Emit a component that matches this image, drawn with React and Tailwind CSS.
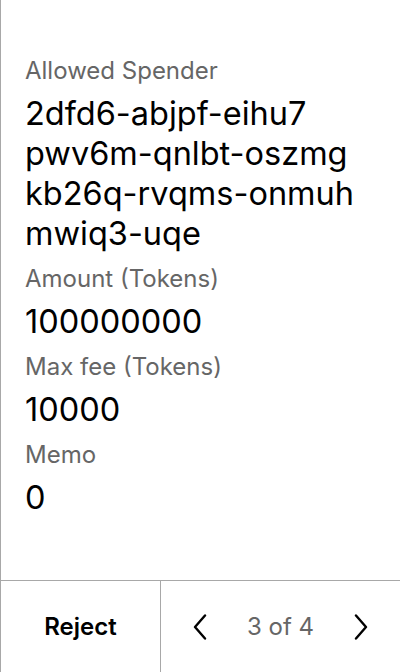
const fields = [
  { label: 'Allowed Spender', lines: ['2dfd6-abjpf-eihu7', 'pwv6m-qnlbt-oszmg', 'kb26q-rvqms-onmuh', 'mwiq3-uqe'] },
  { label: 'Amount (Tokens)', lines: ['100000000'] },
  { label: 'Max fee (Tokens)', lines: ['10000'] },
  { label: 'Memo', lines: ['0'] },
]

function Chevron({ dir }) {
  const pts = dir === 'left' ? '12,1.5 2,13 12,24.5' : '2,1.5 12,13 2,24.5'
  return (
    <svg width="14" height="26" viewBox="0 0 14 26" fill="none">
      <polyline points={pts} stroke="black" strokeWidth="2.4" strokeLinecap="round" strokeLinejoin="round" />
    </svg>
  )
}

export default function App() {
  return (
    <div
      className="h-[672px] w-[400px] flex flex-col bg-white border-l border-[#a8a8a8] text-black"
      style={{ fontFamily: 'Inter, "Noto Sans", sans-serif' }}
    >
      <div className="flex-1 px-6 pt-[57px]">
        {fields.map((f) => (
          <div key={f.label} className="mb-[11px]">
            <div className="text-[24px] leading-[28px] text-[#666]">{f.label}</div>
            <div className="mt-[9px] text-[32.5px] leading-[40px]">
              {f.lines.map((l) => (
                <div key={l}>{l}</div>
              ))}
            </div>
          </div>
        ))}
      </div>

      <div className="h-[92px] grid grid-cols-[160px_1fr] border-t border-[#a8a8a8]">
        <button className="flex items-center justify-center text-[24px] font-semibold border-r border-[#a8a8a8]">
          Reject
        </button>
        <div className="flex items-center justify-between pl-[32px] pr-[32px]">
          <Chevron dir="left" />
          <span className="text-[24px] text-[#666]">3 of 4</span>
          <Chevron dir="right" />
        </div>
      </div>
    </div>
  )
}
